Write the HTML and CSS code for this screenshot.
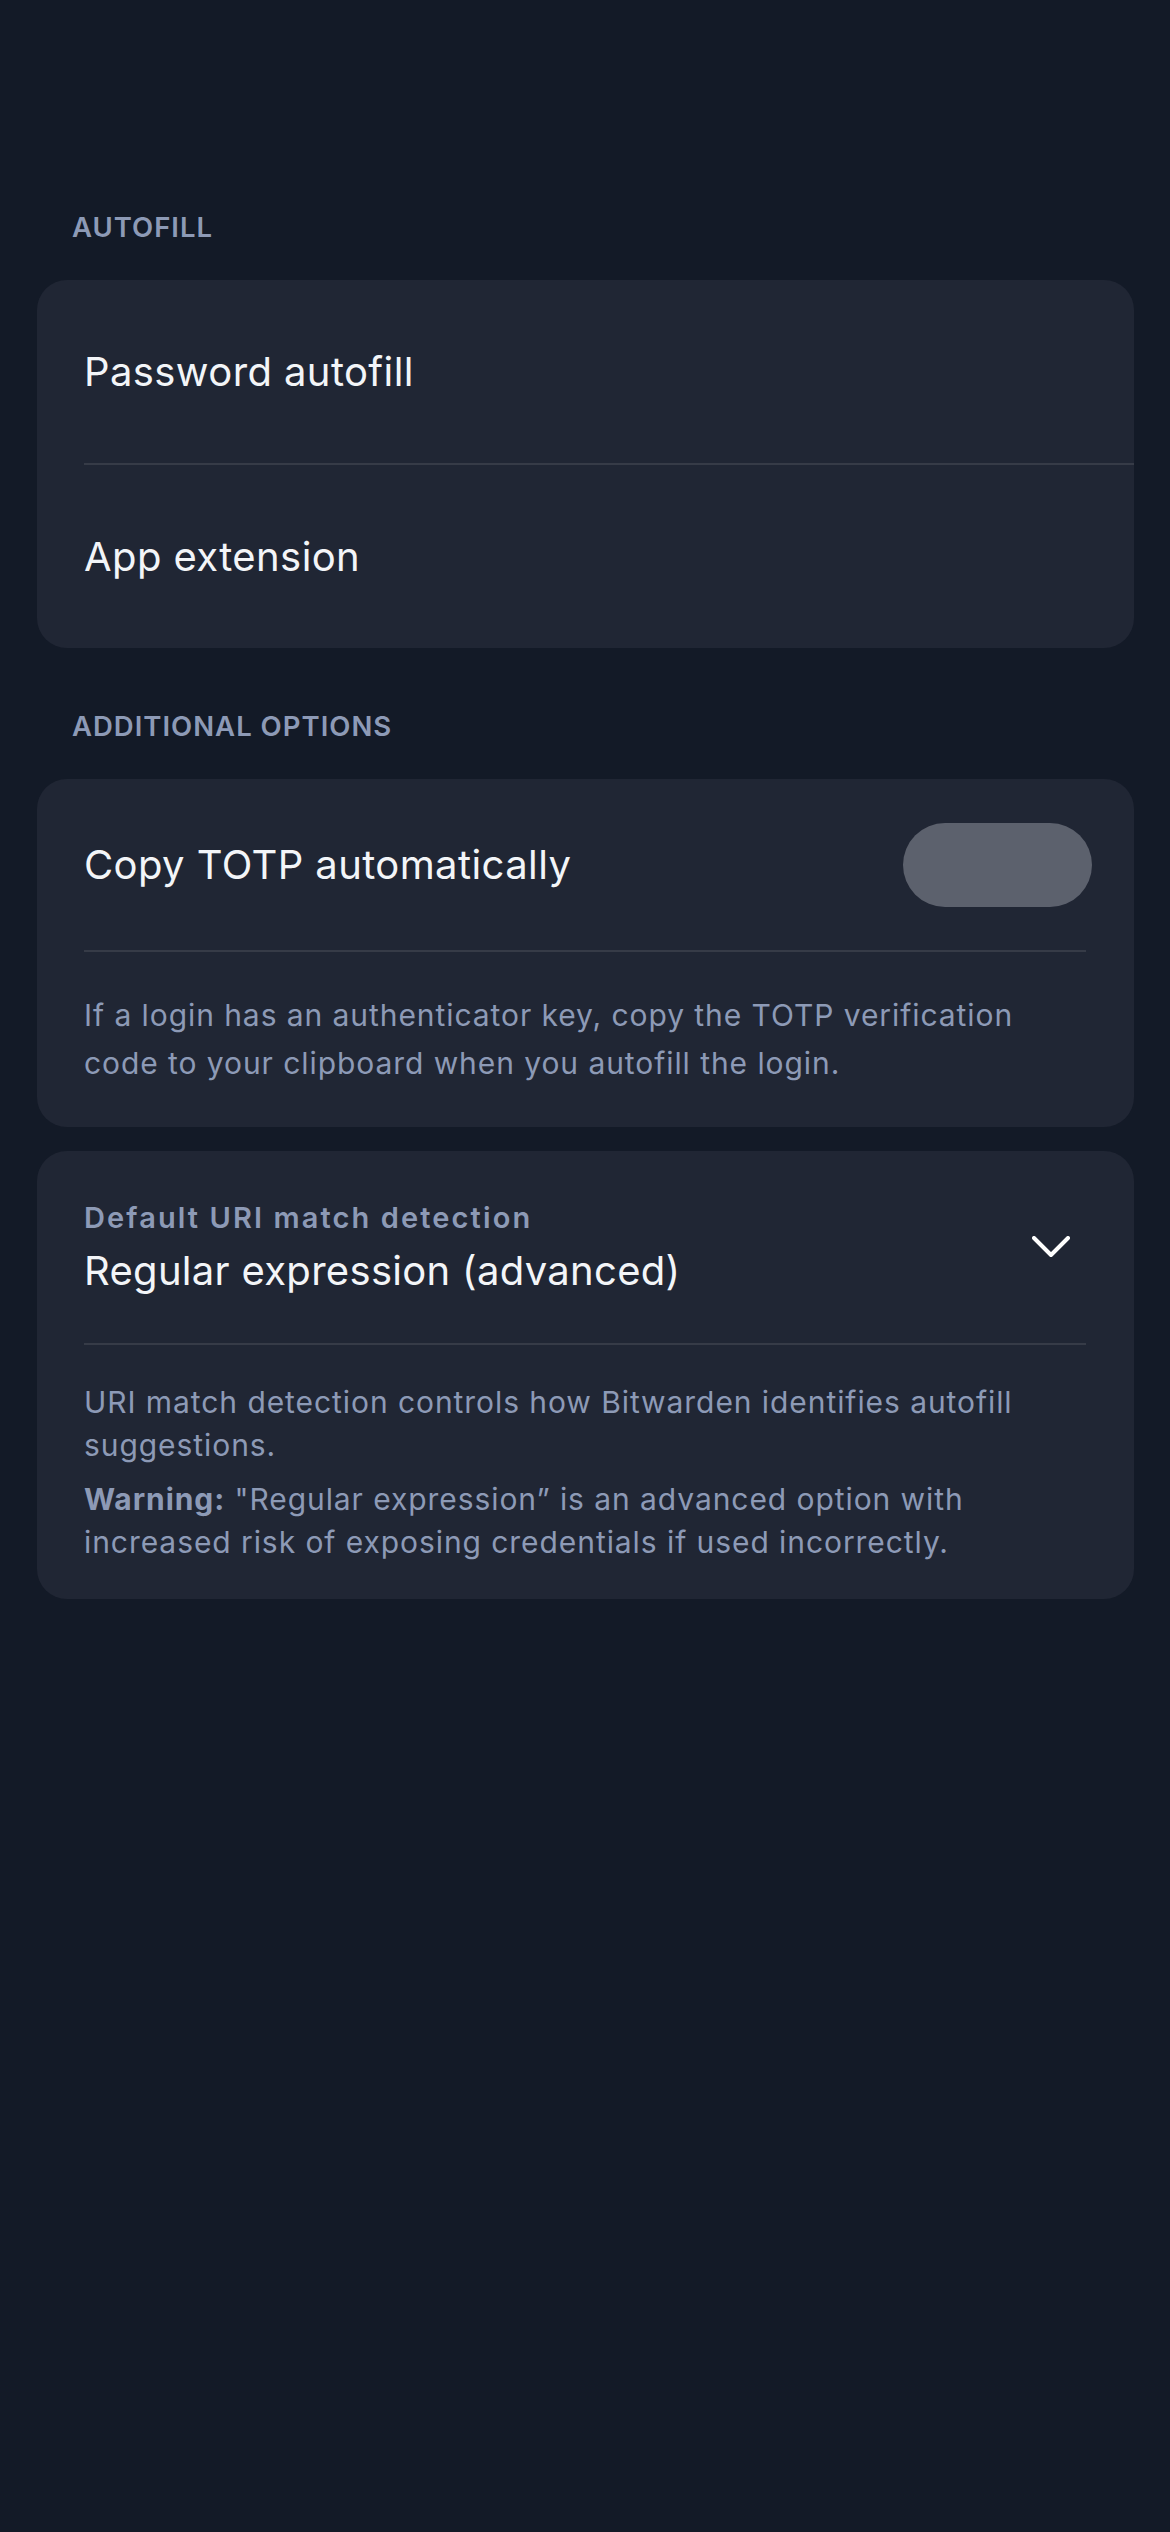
FILE: index.html
```html
<!DOCTYPE html>
<html lang="en">
<head>
<meta charset="utf-8">
<title>Autofill</title>
<link rel="stylesheet" href="styles.css">
</head>
<body>
<main class="page">
  <h2 class="section-title">AUTOFILL</h2>
  <section class="card">
    <div class="row nav-row">
      <span class="row-title">Password autofill</span>
    </div>
    <div class="divider divider-full"></div>
    <div class="row nav-row">
      <span class="row-title">App extension</span>
    </div>
  </section>

  <h2 class="section-title section-title-2">ADDITIONAL OPTIONS</h2>
  <section class="card">
    <div class="row toggle-row">
      <span class="row-title">Copy TOTP automatically</span>
      <span class="toggle" aria-hidden="true"></span>
    </div>
    <div class="divider"></div>
    <p class="help help-totp">If a login has an authenticator key, copy the TOTP verification code to your clipboard when you autofill the login.</p>
  </section>

  <section class="card card-uri">
    <div class="row picker-row">
      <div class="picker-text">
        <span class="picker-label">Default URI match detection</span>
        <span class="picker-value">Regular expression (advanced)</span>
      </div>
      <svg class="chevron" width="38" height="22" viewBox="0 0 38 22" aria-hidden="true">
        <polyline points="2,2 19,19 36,2" fill="none" stroke="#ffffff" stroke-width="4" stroke-linecap="round" stroke-linejoin="round"/>
      </svg>
    </div>
    <div class="divider"></div>
    <div class="help help-uri">
      <p>URI match detection controls how Bitwarden identifies autofill suggestions.</p>
      <p><strong>Warning:</strong> "Regular expression” is an advanced option with increased risk of exposing credentials if used incorrectly.</p>
    </div>
  </section>
</main>
</body>
</html>
```

FILE: styles.css
```css
* {
  box-sizing: border-box;
}

html, body {
  margin: 0;
  padding: 0;
  background: #131a27;
}

body {
  min-height: 2532px;
  font-family: Inter, "Noto Sans", "Liberation Sans", sans-serif;
  color: #f3f5f8;
}

.page {
  display: flex;
  flex-direction: column;
  padding: 210px 36px 0 37px;
}

.section-title {
  margin: 0 0 36px 35px;
  font-size: 27.5px;
  line-height: 34px;
  font-weight: 600;
  color: #8d9ab6;
  letter-spacing: 1px;
}

.section-title-2 {
  margin-top: 61px;
}

.card {
  background: #202634;
  border-radius: 30px;
  overflow: hidden;
  display: flex;
  flex-direction: column;
}

.card-uri {
  margin-top: 24px;
}

.row {
  display: flex;
  align-items: center;
  padding: 0 42px 0 47px;
}

.nav-row {
  height: 183px;
}

.row-title {
  font-size: 40px;
  line-height: 48px;
  font-weight: 400;
  letter-spacing: 0.4px;
  color: #f3f5f8;
}

.divider {
  height: 2px;
  background: #363b47;
  margin: 0 48px 0 47px;
}

.divider-full {
  margin-right: 0;
}

.toggle-row {
  height: 171px;
  justify-content: space-between;
}

.toggle {
  width: 189px;
  height: 84px;
  border-radius: 42px;
  background: #5c616d;
}

.help {
  margin: 0;
  color: #8d9ab6;
  font-size: 30px;
  font-weight: 400;
  letter-spacing: 0.93px;
}

.help-totp {
  padding: 39px 60px 40px 47px;
  line-height: 48px;
}

.picker-row {
  height: 192px;
  justify-content: space-between;
  padding-right: 64px;
}

.picker-text {
  display: flex;
  flex-direction: column;
  gap: 11px;
}

.picker-label {
  font-size: 29px;
  line-height: 36px;
  font-weight: 600;
  letter-spacing: 2.1px;
  color: #8d9ab6;
}

.picker-value {
  font-size: 40px;
  line-height: 48px;
  letter-spacing: 0.3px;
  color: #f3f5f8;
}

.chevron {
  display: block;
}

.help-uri {
  display: flex;
  flex-direction: column;
  gap: 11px;
  padding: 36px 60px 35px 47px;
  line-height: 43px;
}

.help-uri p {
  margin: 0;
}

.help-uri strong {
  font-weight: 700;
}
```
